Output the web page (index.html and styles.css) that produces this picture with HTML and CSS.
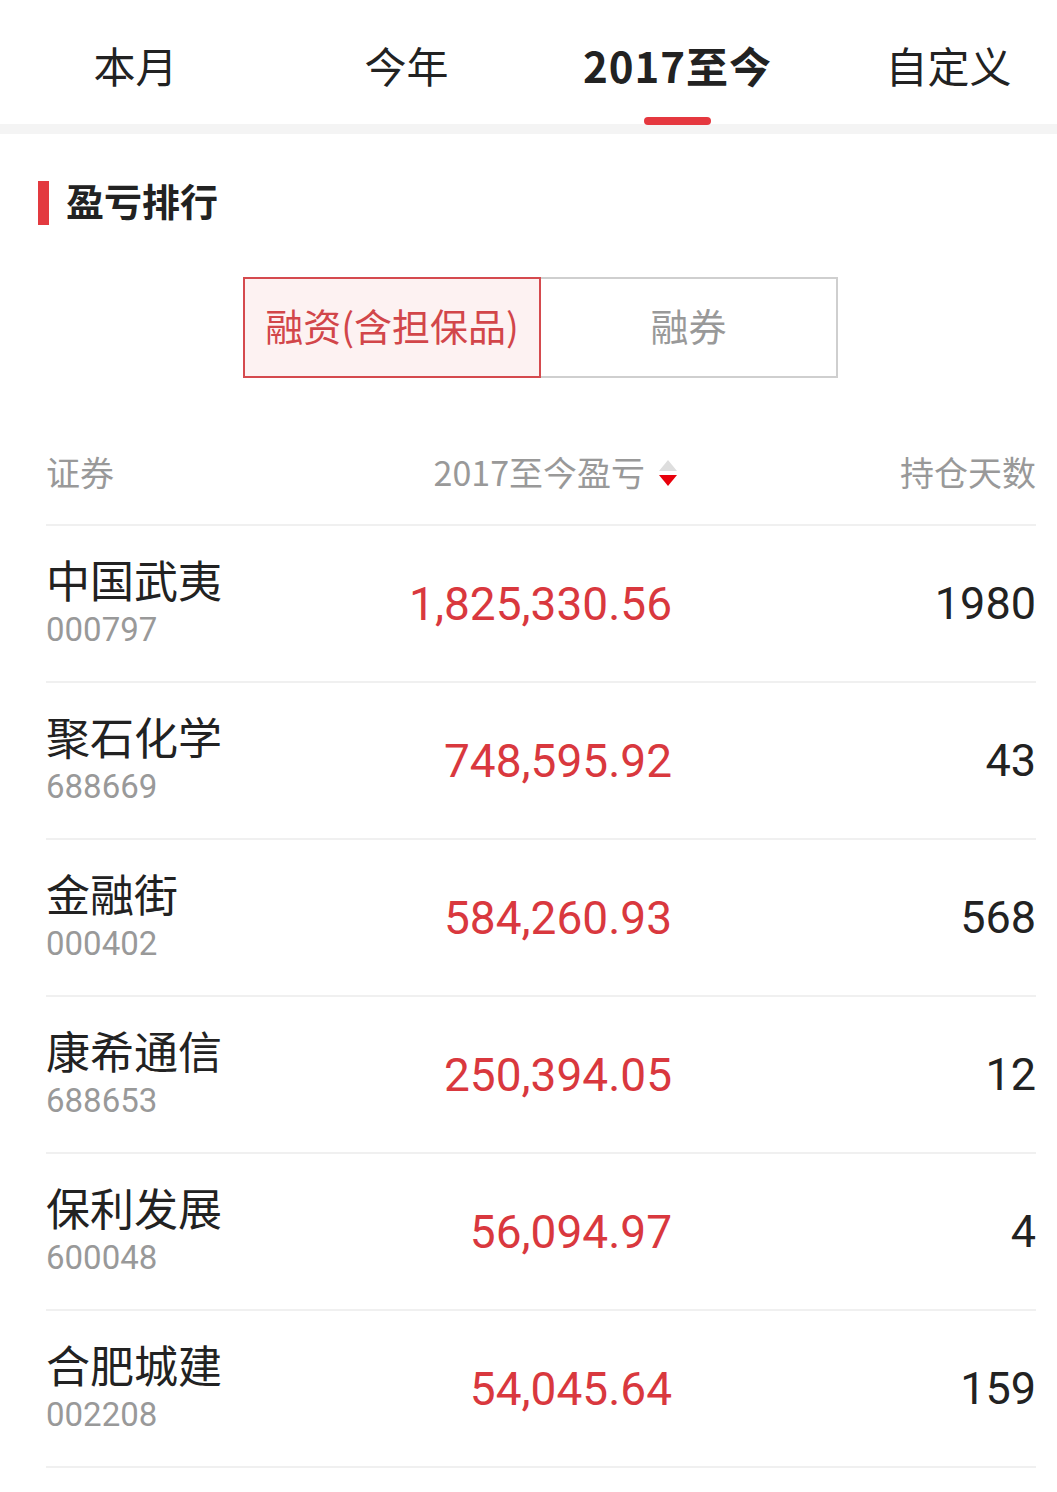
FILE: index.html
```html
<!DOCTYPE html>
<html lang="zh-CN">
<head>
    <meta charset="UTF-8">
    <meta name="viewport" content="width=device-width, initial-scale=1.0">
    <title>盈亏排行</title>
    <link rel="stylesheet" href="styles.css">
</head>
<body>
    <div class="tabs">
        <div class="tab">本月</div>
        <div class="tab">今年</div>
        <div class="tab active">2017至今</div>
        <div class="tab">自定义</div>
    </div>
    <div class="band"></div>

    <div class="section-title"><span class="title-text">盈亏排行</span></div>

    <div class="toggle">
        <div class="toggle-item selected">融资(含担保品)</div>
        <div class="toggle-item">融券</div>
    </div>

    <div class="table">
        <div class="row head">
            <div class="col-name">证券</div>
            <div class="col-value">
                <span class="sort">2017至今盈亏
                    <span class="arrows"><i class="up"></i><i class="down"></i></span>
                </span>
            </div>
            <div class="col-days">持仓天数</div>
        </div>
        <div class="row">
            <div class="col-name"><div class="name">中国武夷</div><div class="code">000797</div></div>
            <div class="col-value num">1,825,330.56</div>
            <div class="col-days num">1980</div>
        </div>
        <div class="row">
            <div class="col-name"><div class="name">聚石化学</div><div class="code">688669</div></div>
            <div class="col-value num">748,595.92</div>
            <div class="col-days num">43</div>
        </div>
        <div class="row">
            <div class="col-name"><div class="name">金融街</div><div class="code">000402</div></div>
            <div class="col-value num">584,260.93</div>
            <div class="col-days num">568</div>
        </div>
        <div class="row">
            <div class="col-name"><div class="name">康希通信</div><div class="code">688653</div></div>
            <div class="col-value num">250,394.05</div>
            <div class="col-days num">12</div>
        </div>
        <div class="row">
            <div class="col-name"><div class="name">保利发展</div><div class="code">600048</div></div>
            <div class="col-value num">56,094.97</div>
            <div class="col-days num">4</div>
        </div>
        <div class="row">
            <div class="col-name"><div class="name">合肥城建</div><div class="code">002208</div></div>
            <div class="col-value num">54,045.64</div>
            <div class="col-days num">159</div>
        </div>
    </div>
</body>
</html>
```

FILE: styles.css
```css
body {
    margin: 0;
    padding: 0;
    background-color: #fff;
    color: #222;
    font-family: 'Noto Sans CJK SC', 'Noto Sans', sans-serif;
}
.tabs {
    display: grid;
    grid-template-columns: repeat(4, 271px);
    height: 124px;
}
.tab {
    position: relative;
    display: flex;
    justify-content: center;
    align-items: center;
    padding-top: 4px;
    box-sizing: border-box;
    font-size: 42px;
    color: #222;
}
.tab.active {
    font-weight: bold;
    letter-spacing: 1px;
}
.tab.active::after {
    content: "";
    position: absolute;
    left: 50%;
    bottom: -1px;
    width: 67px;
    height: 8px;
    margin-left: -34px;
    border-radius: 4px;
    background-color: #e5383f;
}
.band {
    height: 10px;
    background-color: #f4f4f4;
}
.section-title {
    display: flex;
    align-items: center;
    gap: 17px;
    height: 44px;
    margin: 47px 0 0 38px;
    font-size: 38px;
    font-weight: bold;
    line-height: 1;
    color: #222;
}
.section-title::before {
    content: "";
    width: 11px;
    height: 44px;
    background-color: #e33a40;
}
.title-text {
    margin-bottom: 6px;
}
.toggle {
    display: flex;
    justify-content: center;
    padding-left: 24px;
    margin-top: 52px;
}
.toggle-item {
    display: flex;
    justify-content: center;
    align-items: center;
    width: 297px;
    height: 101px;
    box-sizing: border-box;
    padding-bottom: 6px;
    border: 2px solid #cfcfcf;
    border-left: none;
    font-size: 38px;
    color: #999;
}
.toggle-item.selected {
    width: 298px;
    border: 2px solid #d54a4e;
    background-color: #fdf2f2;
    color: #d2464a;
}
.table {
    margin: 40px 21px 0 46px;
}
.row {
    display: grid;
    grid-template-columns: 300px 326px 1fr;
    align-items: center;
    height: 155px;
    border-bottom: 2px solid #f0f0f0;
}
.row.head {
    height: 106px;
    font-size: 34px;
    color: #999;
}
.col-value, .col-days {
    text-align: right;
}
.sort {
    display: inline-flex;
    align-items: center;
    gap: 14px;
    margin-right: -5px;
}
.arrows {
    display: flex;
    flex-direction: column;
    gap: 4px;
    padding-top: 4px;
}
.arrows i {
    width: 0;
    height: 0;
    border-left: 9px solid transparent;
    border-right: 9px solid transparent;
}
.arrows .up {
    border-bottom: 11px solid #dedede;
}
.arrows .down {
    border-top: 11px solid #e8000b;
}
.name {
    font-size: 44px;
    line-height: 52px;
    color: #222;
}
.code {
    font-family: Roboto, sans-serif;
    font-size: 33px;
    line-height: 50px;
    color: #999;
}
.num {
    font-family: Roboto, sans-serif;
    font-size: 46px;
    line-height: 1;
}
.col-value.num {
    color: #d9383e;
}
.col-days.num {
    font-size: 45px;
    color: #222;
}
```
